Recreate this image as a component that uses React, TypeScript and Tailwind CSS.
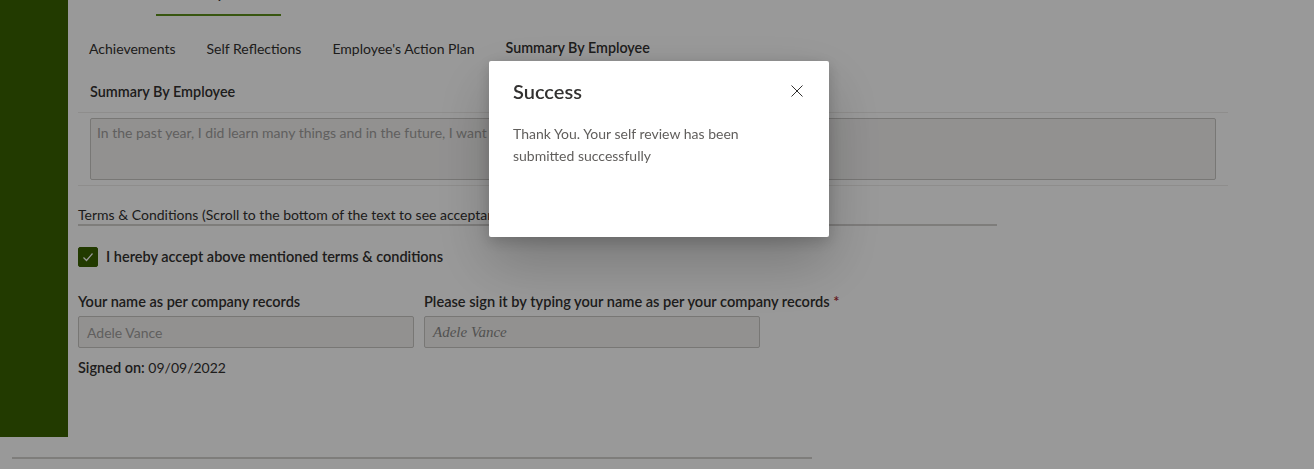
import React from 'react';

const font = "font-['Lato','Noto_Sans',sans-serif]";

function Tabs() {
  const tabs = ['Achievements', 'Self Reflections', "Employee's Action Plan", 'Summary By Employee'];
  return (
    <div className="mt-[10px] flex h-[44px] items-center gap-[31px] pl-[11px] text-[14px] text-[#323130]">
      {tabs.map((t, i) => (
        <span key={t} className={i === 3 ? 'text-[14.3px] font-semibold' : ''}>
          {t}
        </span>
      ))}
    </div>
  );
}

function CloseIcon() {
  return (
    <svg width="12" height="12" viewBox="0 0 12 12" fill="none">
      <path d="M0.5 0.5 L11.5 11.5 M11.5 0.5 L0.5 11.5" stroke="#323130" strokeWidth="1" />
    </svg>
  );
}

function SuccessDialog() {
  return (
    <div className="fixed inset-0 flex items-start justify-center bg-black/40 pl-[4px] pt-[61px]">
      <div className="h-[176px] w-[340px] rounded-[2px] bg-white shadow-[0_25.6px_57.6px_0_rgba(0,0,0,0.22),0_4.8px_14.4px_0_rgba(0,0,0,0.18)]">
        <div className="flex items-center justify-between pl-[24px] pr-[16px] pt-[14px]">
          <h2 className="text-[20px] font-semibold leading-[28px] text-[#323130]">Success</h2>
          <button type="button" className="flex h-[32px] w-[32px] items-center justify-center">
            <CloseIcon />
          </button>
        </div>
        <p className="mt-[16px] w-[250px] pl-[24px] text-[14px] leading-[22px] text-[#605e5c]">
          Thank You. Your self review has been submitted successfully
        </p>
      </div>
    </div>
  );
}

export default function App() {
  return (
    <div className={`relative min-h-[469px] w-full overflow-hidden bg-white ${font}`}>
      <div className="flex h-[437px]">
        <div className="w-[68px] bg-[#3a6100]" />

        <div className="w-[1150px] pl-[10px]">
          {/* scrolled tab strip, only its underline shows */}
          <div className="-mt-[28px] ml-[78px] flex h-[44px] w-[125px] items-center justify-start border-b-2 border-[#5e8f1c] pl-[10px] text-[14px] font-semibold text-[#323130]">
            Summary
          </div>

          <Tabs />

          <div className="w-[1150px]">
            <div className="mt-[12px] border-b border-[#edebe9] pb-[10px] pl-[12px] text-[14.4px] font-semibold leading-[20px] text-[#323130]">
              Summary By Employee
            </div>
            <div className="mx-[12px] mt-[5px] h-[62px] rounded-[2px] border border-[#c8c6c4] bg-[#f3f2f1] pl-[6px] pt-[4px] text-[14px] leading-[20px] text-[#a19f9d]">
              In the past year, I did learn many things and in the future, I want to keep learning and growing with the team.
            </div>
            <div className="mt-[5px] border-b border-[#edebe9]" />
          </div>

          <div className="mt-[20px] w-[919px] border-b-2 border-[#d2d0ce] text-[14px] leading-[18px] text-[#323130]">
            Terms &amp; Conditions (Scroll to the bottom of the text to see acceptance checkbox)
          </div>

          <div className="mt-[21px] flex items-center gap-[8px]">
            <span className="flex h-[20px] w-[20px] items-center justify-center rounded-[2px] border border-[#3a6100] bg-[#3a6100]">
              <svg width="12" height="12" viewBox="0 0 12 12" fill="none">
                <path d="M1.5 6.5 L4.5 9.5 L10.5 2.5" stroke="#ffffff" strokeWidth="1.2" />
              </svg>
            </span>
            <span className="text-[14.5px] font-semibold leading-[20px] text-[#323130]">
              I hereby accept above mentioned terms &amp; conditions
            </span>
          </div>

          <div className="mt-[25px] flex gap-[10px]">
            <div className="w-[336px]">
              <div className="text-[14.5px] font-semibold leading-[20px] text-[#323130]">Your name as per company records</div>
              <div className="mt-[4px] flex h-[32px] items-center rounded-[2px] border border-[#c8c6c4] bg-[#f3f2f1] pl-[8px] text-[14px] text-[#a19f9d]">
                Adele Vance
              </div>
            </div>
            <div className="w-[336px]">
              <div className="whitespace-nowrap text-[14.6px] font-semibold leading-[20px] text-[#323130]">
                Please sign it by typing your name as per your company records <span className="text-[#a4262c]">*</span>
              </div>
              <div className="mt-[4px] flex h-[32px] items-center rounded-[2px] border border-[#c8c6c4] bg-[#f3f2f1] pl-[8px] font-['Liberation_Serif',serif] text-[15px] italic text-[#8a8886]">
                Adele Vance
              </div>
            </div>
          </div>

          <div className="mt-[10px] text-[14px] leading-[20px] text-[#323130]">
            <span className="text-[14.5px] font-semibold">Signed on:</span> 09/09/2022
          </div>
        </div>
      </div>

      <div className="ml-[12px] mt-[20px] h-[2px] w-[800px] bg-[#d2d0ce]" />

      <SuccessDialog />
    </div>
  );
}
